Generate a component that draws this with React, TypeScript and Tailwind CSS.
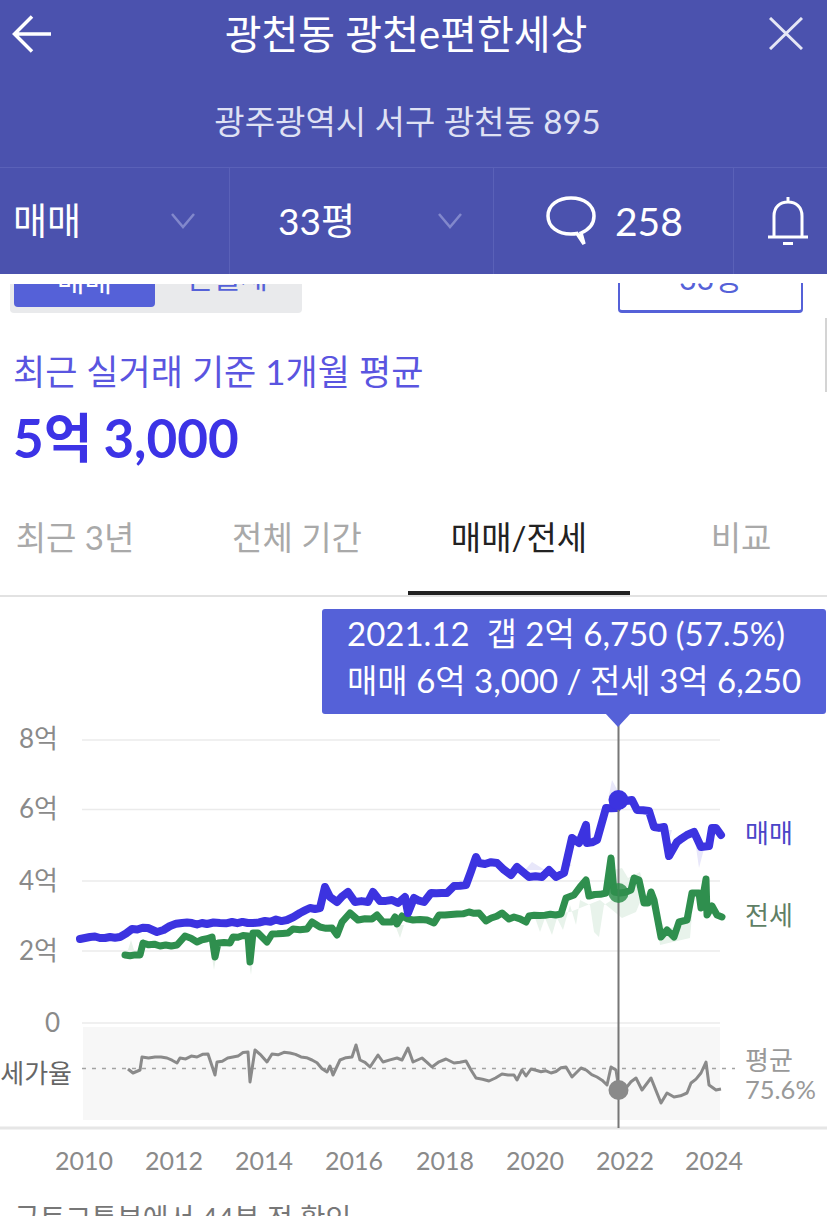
const fontStack = 'font-["Lato","Noto_Sans_CJK_KR",sans-serif]';

const bluePts =
  "80,939 90,937 100,938 110,937 120,937 132,929 148,928 157,932 170,926 182,923 207,924 220,923 232,922 253,923 265,921 287,920 300,913 310,908 320,908 325,887 330,897 337,902 348,892 355,902 368,902 373,892 380,901 392,900 398,903 405,897 408,913 414,898 424,902 431,893 447,893 454,886 466,885 476,857 479,863 497,863 511,875 517,867 529,877 542,877 549,870 556,877 564,873 572,838 579,843 586,825 587,843 597,840 606,808 617,808 619,800 632,800 637,810 649,811 654,827 664,827 669,856 677,842 687,835 694,832 701,847 709,846 712,828 716,828 721,835";
const greenPts =
  "125,955 140,955 143,943 160,946 177,945 185,936 197,942 212,937 215,957 218,943 230,943 233,937 248,936 250,962 253,933 258,933 267,942 272,934 288,933 293,929 307,929 312,922 320,927 332,928 337,935 342,922 350,913 358,920 372,919 377,915 383,922 392,922 395,917 397,924 402,916 413,920 427,920 434,923 439,915 457,914 469,912 479,913 486,921 502,913 509,919 514,917 526,922 529,916 561,914 566,898 574,895 586,880 589,896 606,893 611,858 614,892 620,893 631,890 634,878 639,880 644,903 648,903 651,892 654,900 661,937 667,930 674,937 679,922 687,920 692,893 699,893 701,908 706,879 707,915 712,906 717,915 722,917";
const grayPts =
  "128,1069 133,1073 140,1070 142,1057 155,1057 167,1058 177,1063 180,1058 197,1057 208,1054 215,1075 217,1062 233,1057 248,1052 250,1082 255,1050 267,1062 272,1054 290,1053 312,1060 327,1072 330,1066 333,1075 340,1060 352,1057 356,1045 360,1060 370,1067 378,1055 383,1062 397,1058 402,1060 408,1048 413,1062 422,1058 432,1067 446,1059 454,1063 466,1061 476,1078 489,1081 502,1074 514,1075 517,1080 522,1070 526,1076 531,1069 551,1073 566,1067 572,1077 581,1068 597,1077 607,1085 611,1067 616,1070 619,1090 626,1088 636,1078 642,1090 651,1078 661,1103 667,1093 674,1097 687,1093 691,1083 701,1073 706,1062 709,1085 716,1090 721,1089";

/* Break long segments up and add a small wobble, the monthly data is never straight */
function wobble(points: string, amp: number) {
  const pts = points.split(" ").map((p) => p.split(",").map(Number));
  const out: string[] = [];
  pts.forEach(([x, y], i) => {
    out.push(`${x},${y}`);
    const next = pts[i + 1];
    if (!next) return;
    const steps = Math.floor((next[0] - x) / 5);
    for (let s = 1; s < steps; s++) {
      const px = x + ((next[0] - x) * s) / steps;
      const py = y + ((next[1] - y) * s) / steps + Math.sin(px * 1.7) * amp;
      out.push(`${px.toFixed(1)},${py.toFixed(1)}`);
    }
  });
  return out.join(" ");
}

const gridYs = [740, 809.5, 881, 951, 1023];
const yLabels = [
  { t: "8억", y: 738 },
  { t: "6억", y: 808 },
  { t: "4억", y: 880 },
  { t: "2억", y: 950 },
];
const years = [
  { t: "2010", x: 84 },
  { t: "2012", x: 174 },
  { t: "2014", x: 264 },
  { t: "2016", x: 354 },
  { t: "2018", x: 445 },
  { t: "2020", x: 535 },
  { t: "2022", x: 625 },
  { t: "2024", x: 714 },
];
const tabs = ["최근 3년", "전체 기간", "매매/전세", "비교"];

/* Price chart, numbers are page pixels */
function Chart() {
  return (
    <svg viewBox="0 597 827 600" className="block h-[600px] w-[827px]">
      {gridYs.map((y) => (
        <line key={y} x1="82" x2="720" y1={y} y2={y} stroke="#ebebeb" strokeWidth="1.5" />
      ))}
      <rect x="83" y="1027" width="637" height="93" fill="#f7f7f7" />
      <line x1="82" x2="735" y1="1068.5" y2="1068.5" stroke="#a3a3a3" strokeWidth="1.5" strokeDasharray="4 6" />
      <line x1="0" x2="827" y1="1128" y2="1128" stroke="#e6e6e6" strokeWidth="3" />

      <path
        d="M534,915 L540,932 L545,918 L552,935 L557,918 L563,930 L570,905 L576,925 L580,900 L590,905 L594,932 L599,937 L604,905 L612,900 L614,870 L622,868 L628,878 L640,872 L645,890 L636,912 L622,918 L600,900 L570,912 Z"
        fill="#e8f3eb"
      />
      <path d="M654,905 L660,945 L690,938 L692,915 L680,925 L665,930 Z" fill="#e8f3eb" />
      <path d="M210,945 L214,970 L218,945 Z M247,950 L251,975 L254,950 Z M128,950 L131,940 L134,950 Z M395,925 L400,938 L404,925 Z" fill="#e8f2ea" />
      <path d="M608,800 L612,780 L620,795 Z M695,840 L699,868 L705,845 Z M660,830 L668,845 L672,830 Z M525,870 L532,862 L545,870 Z M557,875 L565,862 L572,865 Z" fill="#e8e7fa" />

      <polyline points={wobble(greenPts, 0.8)} fill="none" stroke="#2f8f4e" strokeWidth="7" strokeLinejoin="round" strokeLinecap="round" />
      <polyline points={wobble(bluePts, 1)} fill="none" stroke="#3c33e0" strokeWidth="8" strokeLinejoin="round" strokeLinecap="round" />
      <polyline points={wobble(grayPts, 1.2)} fill="none" stroke="#8a8a8a" strokeWidth="3" strokeLinejoin="round" />

      <line x1="618.5" x2="618.5" y1="720" y2="1128" stroke="#777" strokeWidth="2" />
      <polygon points="605,713 631,713 618,727" fill="#5561d8" />
      <circle cx="618.5" cy="800" r="10" fill="#3c33e0" />
      <circle cx="618.5" cy="893" r="10" fill="#2f8f4e" fillOpacity="0.85" />
      <circle cx="618.5" cy="1090" r="10" fill="#8a8a8a" />

      <g fill="#8a8a8a" fontSize="26" dominantBaseline="central">
        {yLabels.map((l) => (
          <text key={l.t} x="58" y={l.y} textAnchor="end">
            {l.t}
          </text>
        ))}
        <text x="60" y="1022" textAnchor="end">
          0
        </text>
        <text x="72" y="1073" textAnchor="end" fill="#666">
          세가율
        </text>
        {years.map((l) => (
          <text key={l.t} x={l.x} y="1160" textAnchor="middle" fontSize="25">
            {l.t}
          </text>
        ))}
        <text x="745" y="833" fill="#4a45c8">
          매매
        </text>
        <text x="745" y="915" fill="#5f7f66">
          전세
        </text>
        <text x="745" y="1060" fill="#999">
          평균
        </text>
        <text x="745" y="1089" fill="#999" fontSize="25.5">
          75.6%
        </text>
      </g>
    </svg>
  );
}

function Chevron() {
  return (
    <svg width="24" height="16" viewBox="0 0 24 16" fill="none" stroke="#8288cc" strokeWidth="2.5">
      <path d="M1,1 L12,14 L23,1" />
    </svg>
  );
}

function Header() {
  return (
    <div className="flex h-[274px] flex-col bg-[#4b52ae] text-white">
      <div className="flex h-[67px] items-center justify-between pl-[12px] pr-[24px]">
        <svg width="40" height="38" viewBox="0 0 40 38" fill="none" stroke="white" strokeWidth="3.5">
          <path d="M20,1.5 L2.5,19 L20,36.5 M2.5,19 L39,19" />
        </svg>
        <div className="mr-[9px] text-[40px]">광천동 광천e편한세상</div>
        <svg width="34" height="33" viewBox="0 0 34 33" fill="none" stroke="#e6e7f5" strokeWidth="3">
          <path d="M1,1 L33,32 M33,1 L1,32" />
        </svg>
      </div>
      <div className="flex h-[100px] items-center justify-center pr-[12px] pt-[10px] text-[33px] text-[#dfe1f4]">
        광주광역시 서구 광천동 895
      </div>
      <div className="flex h-[107px] border-t border-[#5a61b8] text-[37px]">
        <div className="flex w-[230px] items-center justify-between border-r border-[#5a61b8] pl-[13px] pr-[34px]">
          <span>매매</span>
          <Chevron />
        </div>
        <div className="flex w-[264px] items-center justify-between border-r border-[#5a61b8] pl-[48px] pr-[31px]">
          <span>33평</span>
          <Chevron />
        </div>
        <div className="flex w-[240px] items-center gap-[19px] border-r border-[#5a61b8] pl-[52px]">
          <svg width="50" height="50" viewBox="0 0 50 50" fill="none" stroke="white" strokeWidth="3.5">
            <path d="M35,37 C42,34 48,29 48,20 C48,9 38,2 25,2 C12,2 2,9 2,20 C2,31 12,38 25,38 C27,38 29,38 31,37.5 L38,48 Z" />
          </svg>
          <span className="text-[39px]">258</span>
        </div>
        <div className="flex flex-1 items-center justify-center pl-[14px]">
          <svg width="44" height="50" viewBox="0 0 44 50" fill="none" stroke="white" strokeWidth="3">
            <path d="M8,40 L8,20 C8,11 14,6 22,6 C30,6 36,11 36,20 L36,40 M2,41 L42,41 M22,1 L22,6" />
            <path d="M17,47.5 L27,47.5" strokeWidth="3" />
          </svg>
        </div>
      </div>
    </div>
  );
}

export default function App() {
  return (
    <div className={`relative h-[1216px] w-[827px] overflow-hidden bg-white ${fontStack}`}>
      <Header />

      <div className="mt-[9px] flex h-[30px] items-end justify-between overflow-hidden pl-[10px] pr-[24px]">
        <div className="flex h-[29px] w-[292px] items-end overflow-hidden rounded-b bg-[#e9eaec] px-[4px] pb-[6px]">
          <div className="flex h-[23px] w-[141px] shrink-0 items-end justify-center overflow-hidden rounded-b bg-[#5561d8] text-[30px] leading-none text-white">
            <span className="mb-[13px] block">매매</span>
          </div>
          <div className="flex h-[23px] flex-1 items-end justify-center overflow-hidden text-[30px] leading-none text-[#5561d8]">
            <span className="mb-[16px] block">전월세</span>
          </div>
        </div>
        <div className="flex h-[30px] w-[185px] items-end justify-center overflow-hidden rounded-b border-x-2 border-b-[3px] border-[#5561d8] text-[30px] leading-none text-[#5561d8]">
          <span className="mb-[17px] block">33평</span>
        </div>
      </div>

      <div className="absolute right-0 top-[318px] h-[74px] w-[2px] bg-[#d4d4d4]" />

      <div className="flex h-[187px] flex-col pl-[13px] pt-[35px]">
        <div className="text-[35px] leading-[46px] text-[#5a55e0]">최근 실거래 기준 1개월 평균</div>
        <div className="mt-[10px] text-[53px] font-bold leading-[68px] text-[#3c33e6] [word-spacing:-2px]">5억 3,000</div>
      </div>

      <div className="h-[97px] overflow-hidden border-b-2 border-[#e2e2e2]">
        <div className="-ml-[36px] grid h-[95px] w-[888px] grid-cols-4 text-[33px] text-[#a9a9a9]">
          {tabs.map((t) => (
            <div
              key={t}
              className={
                t === "매매/전세"
                  ? "flex items-center justify-center border-b-4 border-[#222] pb-[15px] text-[#222]"
                  : "flex items-center justify-center pb-[19px]"
              }
            >
              {t}
            </div>
          ))}
        </div>
      </div>

      <div className="relative">
        <Chart />
        <div className="absolute left-[322px] top-[12px] flex h-[105px] w-[504px] flex-col justify-center rounded-[3px] bg-[#5561d8] pb-[10px] pl-[25px] text-[33px] leading-[47px] text-white">
          <div className="whitespace-pre">2021.12  갭 2억 6,750 (57.5%)</div>
          <div>매매 6억 3,000 / 전세 3억 6,250</div>
        </div>
      </div>

      <div className="pl-[14px] pt-[3px] text-[28px] leading-[36px] text-[#777]">국토교통부에서 44분 전 확인</div>
    </div>
  );
}
